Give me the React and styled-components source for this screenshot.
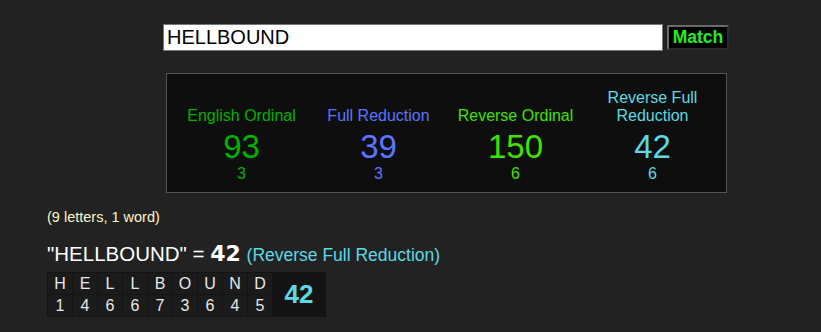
import React, { useState } from "react";
import styled, { createGlobalStyle } from "styled-components";

const GlobalStyle = createGlobalStyle`
  body {
    margin: 0;
    background: #222222;
    font-family: "Liberation Sans", Arial, sans-serif;
  }
`;

const ciphers = [
  { name: "English Ordinal", value: 93, reduced: 3, color: "#00b100" },
  { name: "Full Reduction", value: 39, reduced: 3, color: "#5c74ff" },
  { name: "Reverse Ordinal", value: 150, reduced: 6, color: "#3fe200" },
  { name: "Reverse Full Reduction", value: 42, reduced: 6, color: "#5ed8e2" },
];

const letters = [
  ["H", 1], ["E", 4], ["L", 6], ["L", 6], ["B", 7],
  ["O", 3], ["U", 6], ["N", 4], ["D", 5],
];

export default function App() {
  const [phrase, setPhrase] = useState("HELLBOUND");
  return (
    <>
      <GlobalStyle />
      <Page>
        <SearchRow>
          <PhraseInput value={phrase} onChange={(e) => setPhrase(e.target.value)} />
          <MatchButton>Match</MatchButton>
        </SearchRow>
        <Panel>
          {ciphers.map((c) => (
            <Cipher key={c.name} $color={c.color}>
              <CipherName>{c.name === "Reverse Full Reduction" ? <>Reverse Full<br />Reduction</> : c.name}</CipherName>
              <CipherValue>{c.value}</CipherValue>
              <CipherReduced>{c.reduced}</CipherReduced>
            </Cipher>
          ))}
        </Panel>
        <Count>(9 letters, 1 word)</Count>
        <Result>
          "HELLBOUND" = <strong>42</strong> <span>(Reverse Full Reduction)</span>
        </Result>
        <Breakdown>
          <tbody>
            <tr>
              {letters.map(([l], i) => (
                <Cell key={i}>{l}</Cell>
              ))}
              <TotalCell rowSpan={2}>42</TotalCell>
            </tr>
            <tr>
              {letters.map(([, n], i) => (
                <Cell key={i}>{n}</Cell>
              ))}
            </tr>
          </tbody>
        </Breakdown>
      </Page>
    </>
  );
}

const Page = styled.div`
  padding-top: 24px;
  width: 821px;
`;

const SearchRow = styled.div`
  display: flex;
  align-items: center;
  gap: 4px;
  margin-left: 163px;
`;

const PhraseInput = styled.input`
  box-sizing: border-box;
  width: 500px;
  height: 27px;
  border: 1px solid #767676;
  padding: 0 3px;
  font-family: "Liberation Sans", Arial, sans-serif;
  font-size: 20px;
  color: #000;
  background: #fff;
  outline: none;
`;

const MatchButton = styled.button`
  box-sizing: border-box;
  width: 62px;
  height: 25px;
  background: #000;
  border: 2px solid;
  border-color: #6a6a6a #2a2a2a #2a2a2a #6a6a6a;
  color: #22ee22;
  font-family: "Liberation Sans", Arial, sans-serif;
  font-weight: bold;
  font-size: 17.5px;
  padding: 0;
`;

const Panel = styled.div`
  box-sizing: border-box;
  margin: 22px 0 0 166px;
  width: 561px;
  height: 120px;
  background: #0e0e0e;
  border: 1px solid #555;
  display: grid;
  grid-template-columns: repeat(4, 137px);
  padding: 0 6px;
  align-items: end;
  padding-bottom: 9px;
`;

const Cipher = styled.div`
  display: flex;
  flex-direction: column;
  align-items: center;
  color: ${(p) => p.$color};
  text-align: center;
`;

const CipherName = styled.div`
  font-size: 16px;
  line-height: 18px;
  margin-bottom: 4px;
`;

const CipherValue = styled.div`
  font-size: 33px;
  line-height: 36px;
`;

const CipherReduced = styled.div`
  font-size: 16px;
  line-height: 18px;
`;

const Count = styled.div`
  margin: 16px 0 0 47px;
  font-size: 14.5px;
  color: #fbf6c8;
`;

const Result = styled.div`
  margin: 16px 0 0 47px;
  font-size: 20.5px;
  color: #fff;

  strong {
    font-family: "DejaVu Sans", sans-serif;
    font-size: 22px;
  }

  span {
    font-size: 17.5px;
    color: #5ed8e2;
  }
`;

const Breakdown = styled.table`
  margin: 6px 0 0 47px;
  border-collapse: separate;
  border-spacing: 1px;
  background: #141414;
`;

const Cell = styled.td`
  width: 24px;
  height: 21px;
  padding: 0;
  text-align: center;
  font-size: 16px;
  color: #e8e8e8;
  background: #1b1b1b;
`;

const TotalCell = styled.td`
  width: 50px;
  text-align: center;
  font-size: 26px;
  font-weight: bold;
  color: #5ed8e2;
  background: #141414;
`;
